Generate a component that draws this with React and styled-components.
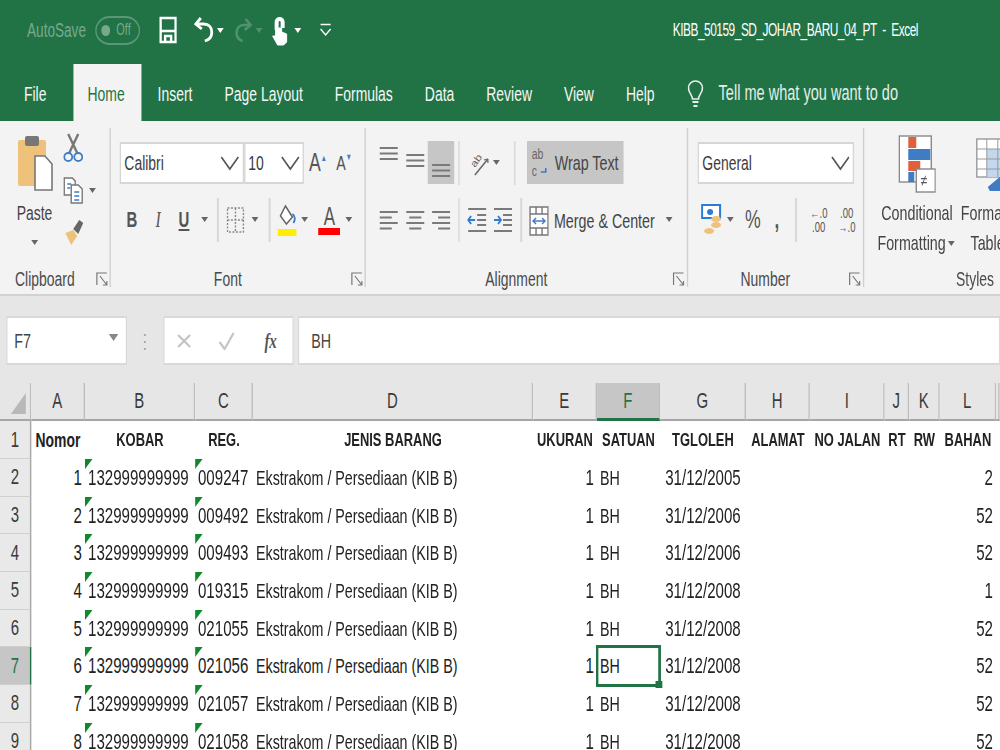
import React from 'react'
import styled, { createGlobalStyle } from 'styled-components'

const GlobalStyle = createGlobalStyle`
    html, body { margin: 0; padding: 0; background: #fff; overflow: hidden; }
    body { font-family: 'Liberation Sans', sans-serif; }
`

const GREEN = '#217346'

// the whole window is squeezed sideways, so horizontal sizes go through x()
const SQUEEZE = 0.68
const x = n => `${n / SQUEEZE}px`

const Viewport = styled.div`
    width: 1000px;
    height: 750px;
    overflow: hidden;
    filter: blur(0.45px);
`
const Page = styled.div`
    width: ${x(1000)};
    height: 750px;
    display: flex;
    flex-direction: column;
    transform: scaleX(${SQUEEZE});
    transform-origin: left top;
`

const Svg = ({ w, h, children, ...rest }) => (
    <svg width={w / SQUEEZE} height={h} viewBox={`0 0 ${w} ${h}`} preserveAspectRatio="none" style={{ flex: 'none' }} {...rest}>
        {children}
    </svg>
)

//title bar
const TitleBar = styled.div`
    height: 64px;
    flex: none;
    background: ${GREEN};
    display: flex;
    align-items: center;
    padding: 0 ${x(82)} 4px ${x(27)};
    box-sizing: border-box;
    color: #fff;
`
const AutoSave = styled.span`
    font-size: 20px;
    color: #78a98d;
    width: ${x(68)};
    white-space: nowrap;
`
const Toggle = styled.span`
    width: ${x(45)};
    height: 29px;
    flex: none;
    box-sizing: border-box;
    border: 2px solid #5c9677;
    border-radius: ${x(15)} / 15px;
    display: flex;
    align-items: center;
    gap: ${x(6)};
    padding-left: ${x(5)};
    color: #78a98d;
    font-size: 16px;
    margin-right: ${x(19)};
    &::before {
        content: '';
        width: ${x(9)};
        height: 11px;
        border-radius: 50%;
        background: #78a98d;
    }
`
const Qat = styled.div`
    display: flex;
    align-items: center;
`
const IconSlot = styled.span`
    display: flex;
    flex: none;
    margin-left: ${p => x(p.$ml || 0)};
`
const DocTitle = styled.div`
    margin-left: auto;
    font-size: 17.5px;
    letter-spacing: -0.7px;
    white-space: pre;
`

//tabs
const TabBar = styled.div`
    height: 57px;
    flex: none;
    background: ${GREEN};
    display: flex;
    align-items: stretch;
    padding-left: ${x(8)};
`
const Tab = styled.div`
    display: flex;
    align-items: center;
    white-space: nowrap;
    padding: 2px ${x(16)} 0;
    font-size: 20.5px;
    color: ${p => (p.$active ? GREEN : '#f4f8f5')};
    background: ${p => (p.$active ? '#f3f3f3' : 'transparent')};
`
const FileTab = styled(Tab)`
    padding-right: ${x(27)};
`
const HomeTab = styled(Tab)`
    padding: 2px ${x(17)} 0 ${x(14)};
`
const TellMe = styled.div`
    display: flex;
    align-items: center;
    white-space: nowrap;
    gap: ${x(15)};
    margin-left: ${x(17)};
    font-size: 21.4px;
    color: #e3eee8;
    padding-top: 2px;
`

//ribbon
const Ribbon = styled.div`
    height: 175px;
    flex: none;
    box-sizing: border-box;
    background: #f3f3f3;
    border-bottom: 2px solid #d2d2d2;
    display: flex;
    padding-top: 7px;
    color: #444;
`
const Group = styled.div`
    width: ${p => x(p.$w)};
    flex: none;
    height: 159px;
    box-sizing: border-box;
    border-right: ${p => (p.$last ? 'none' : `${x(2)} solid #cfcfcf`)};
    display: flex;
    flex-direction: column;
    position: relative;
`
const GroupBody = styled.div`
    flex: 1;
    min-height: 0;
    display: flex;
`
const GroupLabel = styled.div`
    height: 16px;
    flex: none;
    display: flex;
    align-items: center;
    justify-content: center;
    padding-right: ${x(20)};
    font-size: 20.5px;
    color: #4a4a4a;
`
const LauncherSlot = styled.span`
    position: absolute;
    right: ${x(1)};
    bottom: 0;
    display: flex;
`
const ToolRows = styled.div`
    display: flex;
    flex-direction: column;
    gap: 14px;
    padding-top: 13px;
    padding-left: ${p => x(p.$left || 0)};
`
const ToolRow = styled.div`
    display: flex;
    align-items: center;
    height: 43px;
`
const PasteCol = styled.div`
    width: ${x(63)};
    flex: none;
    display: flex;
    flex-direction: column;
    align-items: center;
    padding-top: 6px;
    padding-left: ${x(7)};
    box-sizing: border-box;
    font-size: 20.5px;
`
const PasteLabel = styled.span`
    margin-top: 9px;
    margin-bottom: 15px;
    margin-right: ${x(1)};
`
const ClipCol = styled.div`
    display: flex;
    flex-direction: column;
    gap: 14px;
    padding-top: 5px;
`
const ClipRow = styled.div`
    display: flex;
    align-items: center;
`
const Combo = styled.div`
    width: ${p => x(p.$w)};
    height: 42px;
    flex: none;
    box-sizing: border-box;
    background: #fff;
    border: 2px solid #d6d6d6;
    border-left-width: ${x(2)};
    border-right-width: ${x(2)};
    display: flex;
    align-items: center;
    justify-content: space-between;
    padding: 0 ${x(3)} 0 ${x(3)};
    font-size: 20.5px;
    color: #3c3c3c;
`
const Glyph = styled.span`
    width: ${p => x(p.$w || 26)};
    flex: none;
    text-align: center;
    margin-left: ${p => x(p.$ml || 0)};
    font-family: ${p => (p.$serif ? "'Liberation Serif', serif" : 'inherit')};
    font-style: ${p => (p.$italic ? 'italic' : 'normal')};
    font-weight: ${p => (p.$bold ? 700 : 400)};
    text-decoration: ${p => (p.$under ? 'underline' : 'none')};
    font-size: ${p => p.$size || 20}px;
    line-height: ${p => p.$lh || 'normal'};
    color: #555;
`
const Mark = styled.span`
    color: #3f7cc4;
    font-size: 9px;
    vertical-align: ${p => p.$lift || 10}px;
`
const Blue = styled.span`
    color: #2b7cd3;
`
const ColorA = styled(Glyph)`
    line-height: 24px;
    border-bottom: 7px solid #ff0000;
`
const Sep = styled.span`
    width: ${x(2)};
    height: ${p => p.$h || 44}px;
    flex: none;
    background: #d8d8d8;
    margin: 0 ${p => x(p.$m || 4)};
`
const Arrow = styled.span`
    flex: none;
    width: 0;
    height: 0;
    border-left: ${x(4)} solid transparent;
    border-right: ${x(4)} solid transparent;
    border-top: 5px solid ${p => p.$color || '#666'};
    margin: 0 ${p => x(p.$m || 5)};
`
const Pressed = styled.div`
    background: ${p => (p.$on ? '#c6c6c6' : 'transparent')};
    width: ${p => x(p.$w || 26)};
    height: 43px;
    flex: none;
    display: flex;
    align-items: ${p => p.$align || 'center'};
    justify-content: ${p => p.$justify || 'center'};
    gap: ${x(5)};
    font-size: 21px;
    color: #444;
    box-sizing: border-box;
    white-space: nowrap;
    padding-top: ${p => p.$top || 0}px;
    padding-left: ${p => x(p.$left || 0)};
`
const StylesBody = styled.div`
    display: flex;
    padding-top: 5px;
    padding-left: ${x(14)};
    gap: ${x(6)};
`
const StyleItem = styled.div`
    width: ${p => x(p.$w)};
    flex: none;
    display: flex;
    flex-direction: column;
    align-items: center;
    font-size: 21px;
    line-height: 30px;
    white-space: nowrap;
`
const StyleIconBox = styled.div`
    height: 62px;
    margin-bottom: 3px;
    display: flex;
    align-items: center;
`
const FormatLine = styled.span`
    display: flex;
    align-items: center;
`

//formula bar
const FormulaBar = styled.div`
    height: 87px;
    flex: none;
    box-sizing: border-box;
    background: #e6e6e6;
    padding: 20px 0 18px ${x(6)};
    display: flex;
    align-items: stretch;
`
const Field = styled.div`
    background: #fff;
    box-sizing: border-box;
    border: 2px solid #d9d9d9;
    border-left-width: ${x(2)};
    border-right-width: ${x(2)};
    display: flex;
    align-items: center;
    font-size: 21px;
    color: #444;
    width: ${p => x(p.$w || 0)};
    flex: ${p => (p.$grow ? 1 : 'none')};
    padding: 0 ${p => x(p.$pad || 0)};
    justify-content: ${p => p.$justify || 'flex-start'};
    margin-left: ${p => x(p.$ml || 0)};
`
const NameArrow = styled.span`
    flex: none;
    width: 0;
    height: 0;
    margin-bottom: 7px;
    border-left: ${x(5)} solid transparent;
    border-right: ${x(5)} solid transparent;
    border-top: 7px solid #888;
`
const GripDots = styled.span`
    width: ${x(36)};
    flex: none;
    display: flex;
    align-items: center;
    justify-content: center;
    color: #999;
    font-size: 20px;
`

//sheet
const Sheet = styled.div`
    display: grid;
    grid-template-columns: ${[31, 54, 110, 58, 280, 64, 63, 86, 64, 75, 24, 31, 56, 4].map(x).join(' ')};
    grid-template-rows: 38px 38px repeat(8, 37.7px);
    background: #fff;
`
const ColHead = styled.div`
    background: ${p => (p.$active ? '#c6c6c6' : '#e6e6e6')};
    color: ${p => (p.$active ? GREEN : '#3a3a3a')};
    border-right: ${x(1.5)} solid #bdbdbd;
    border-bottom: ${p => (p.$active ? `3px solid ${GREEN}` : '2px solid #a6a6a6')};
    box-sizing: border-box;
    display: flex;
    align-items: center;
    justify-content: center;
    font-size: 22px;
`
const Corner = styled.div`
    background: #e6e6e6;
    border-right: ${x(1.5)} solid #bdbdbd;
    border-bottom: 2px solid #a6a6a6;
    box-sizing: border-box;
    display: flex;
    align-items: flex-end;
    justify-content: flex-end;
    padding: 0 ${x(4)} 5px 0;
    &::before {
        content: '';
        border-style: solid;
        border-width: 0 0 21px ${x(15)};
        border-color: transparent transparent #b8b8b8 transparent;
    }
`
const RowHead = styled.div`
    background: ${p => (p.$active ? '#c6c6c6' : '#e9e9e9')};
    color: ${p => (p.$active ? GREEN : '#3a3a3a')};
    border-right: ${p => (p.$active ? `${x(2)} solid ${GREEN}` : `${x(1.5)} solid #a6a6a6`)};
    border-bottom: 1.5px solid #cfcfcf;
    box-sizing: border-box;
    display: flex;
    align-items: center;
    justify-content: center;
    font-size: 22px;
`
const Cell = styled.div`
    position: relative;
    box-sizing: border-box;
    display: flex;
    align-items: center;
    white-space: nowrap;
    padding: 0 ${x(3)};
    font-size: ${p => (p.$size ? p.$size : p.$num ? 22.2 : p.$bold ? 19 : 21)}px;
    color: #222;
    font-weight: ${p => (p.$bold ? 700 : 400)};
    justify-content: ${p => (p.$align === 'right' ? 'flex-end' : p.$align === 'center' ? 'center' : 'flex-start')};
    &::before {
        content: '';
        display: ${p => (p.$flag ? 'block' : 'none')};
        position: absolute;
        left: 0;
        top: 0;
        border-style: solid;
        border-width: 10px ${x(8)} 0 0;
        border-color: #0f8a2a transparent transparent transparent;
    }
`
const Selection = styled.div`
    position: absolute;
    inset: -2px ${x(-1)} -2px ${x(-1)};
    border: 3px solid ${GREEN};
    border-left-width: ${x(3)};
    border-right-width: ${x(3)};
    &::after {
        content: '';
        position: absolute;
        right: ${x(-4)};
        bottom: -4px;
        width: ${x(7)};
        height: 7px;
        background: ${GREEN};
    }
`

const Chevron = () => (
    <Svg w={19} h={16} fill="none" stroke="#555" strokeWidth="1.6"><path d="M1 2l8.5 12L18 2" /></Svg>
)

const Launch = () => (
    <LauncherSlot>
        <Svg w={13} h={15} fill="none" stroke="#777" strokeWidth="1.2">
            <path d="M1 13V1h10" />
            <path d="M4 4l7 9M11 9v4H7" />
        </Svg>
    </LauncherSlot>
)

const AlignLines = ({ widths, align = 'left', y = 3 }) => (
    <Svg w={20} h={22} stroke="#7a7a7a" strokeWidth="1.8">
        {widths.map((w, i) => {
            const left = align === 'left' ? 1 : align === 'right' ? 19 - w : 10 - w / 2
            return <line key={i} x1={left} x2={left + w} y1={y + i * 5.5} y2={y + i * 5.5} />
        })}
    </Svg>
)

const Indent = ({ out }) => (
    <Svg w={20} h={28} fill="none" strokeWidth="1.8">
        <g stroke="#7a7a7a">
            <line x1="1" x2="19" y1="3" y2="3" />
            <line x1="10" x2="19" y1="9" y2="9" />
            <line x1="10" x2="19" y1="14" y2="14" />
            <line x1="10" x2="19" y1="19" y2="19" />
            <line x1="1" x2="19" y1="25" y2="25" />
        </g>
        <path d={out ? 'M8 14H1M4 10l-3 4 3 4' : 'M1 14h7M5 10l3 4-3 4'} stroke="#2b7cd3" />
    </Svg>
)

const columns = ['A', 'B', 'C', 'D', 'E', 'F', 'G', 'H', 'I', 'J', 'K', 'L']
const headers = ['Nomor', 'KOBAR', 'REG.', 'JENIS BARANG', 'UKURAN', 'SATUAN', 'TGLOLEH', 'ALAMAT', 'NO JALAN', 'RT', 'RW', 'BAHAN']
const rows = [
    ['009247', '31/12/2005', '2'],
    ['009492', '31/12/2006', '52'],
    ['009493', '31/12/2006', '52'],
    ['019315', '31/12/2008', '1'],
    ['021055', '31/12/2008', '52'],
    ['021056', '31/12/2008', '52'],
    ['021057', '31/12/2008', '52'],
    ['021058', '31/12/2008', '52'],
]

const App = () => {
    return (
        <Viewport>
            <GlobalStyle />
            <Page>
                <TitleBar>
                    <AutoSave>AutoSave</AutoSave>
                    <Toggle>Off</Toggle>
                    <Qat>
                        <IconSlot>
                            <Svg w={18} h={28} fill="none" stroke="#fff" strokeWidth="2.4">
                                <path d="M1.5 2h15v24h-15z" />
                                <path d="M1.5 15h15M6 26v-6h6v6" />
                            </Svg>
                        </IconSlot>
                        <IconSlot $ml={17}>
                            <Svg w={20} h={28} fill="none" stroke="#fff" strokeWidth="2.8">
                                <path d="M7 2L2 8l6 5" />
                                <path d="M2 8h8c5 0 8 3 8 8s-3 8-7 9" />
                            </Svg>
                        </IconSlot>
                        <Arrow $m={3} $color="#fff" />
                        <IconSlot $ml={8}>
                            <Svg w={18} h={26} fill="none" stroke="#4f9170" strokeWidth="2.6">
                                <path d="M11 2l5 6-6 5" />
                                <path d="M16 8H9c-4 0-7 3-7 8s3 7 6 8" />
                            </Svg>
                        </IconSlot>
                        <Arrow $m={3} $color="#4f9170" />
                        <IconSlot $ml={5}>
                            <Svg w={18} h={32} fill="#fff" stroke="#fff">
                                <path d="M5 8a4 4 0 0 1 8 0v5h-2V8a2 2 0 0 0-4 0v7H5z" fill="none" strokeWidth="2" />
                                <path d="M5 14h6v4l5 2v8l-3 3H7l-5-9 3 0z" />
                            </Svg>
                        </IconSlot>
                        <Arrow $m={6} $color="#fff" />
                        <IconSlot $ml={12}>
                            <Svg w={12} h={14} fill="none" stroke="#fff" strokeWidth="1.4">
                                <path d="M1 1.5h10M1 6l5 6 5-6" />
                            </Svg>
                        </IconSlot>
                    </Qat>
                    <DocTitle>{'KIBB_50159_SD_JOHAR_BARU_04_PT  -  Excel'}</DocTitle>
                </TitleBar>

                <TabBar>
                    <FileTab>File</FileTab>
                    <HomeTab $active>Home</HomeTab>
                    <Tab>Insert</Tab>
                    <Tab>Page Layout</Tab>
                    <Tab>Formulas</Tab>
                    <Tab>Data</Tab>
                    <Tab>Review</Tab>
                    <Tab>View</Tab>
                    <Tab>Help</Tab>
                    <TellMe>
                        <Svg w={16} h={30} fill="none" stroke="#e8f0ec" strokeWidth="1.6">
                            <path d="M5 20c0-4-4-6-4-11a7 7 0 0 1 14 0c0 5-4 7-4 11z" />
                            <path d="M5 23h6M6 27h4" strokeWidth="2" />
                        </Svg>
                        Tell me what you want to do
                    </TellMe>
                </TabBar>

                <Ribbon>
                    <Group $w={111}>
                        <GroupBody>
                            <PasteCol>
                                <Svg w={36} h={58}>
                                    <rect x="1" y="6" width="28" height="46" rx="2" fill="#eec27a" />
                                    <rect x="8" y="2" width="14" height="10" rx="2" fill="#777" />
                                    <path d="M18 22h10l7 8v26H18z" fill="#fff" stroke="#777" strokeWidth="1.6" />
                                </Svg>
                                <PasteLabel>Paste</PasteLabel>
                                <Arrow />
                            </PasteCol>
                            <ClipCol>
                                <Svg w={20} h={30} fill="none">
                                    <path d="M5 1l9 19M15 1L6 20" stroke="#777" strokeWidth="2.4" />
                                    <circle cx="5" cy="24" r="4" stroke="#3f7cc4" strokeWidth="1.8" />
                                    <circle cx="15" cy="24" r="4" stroke="#3f7cc4" strokeWidth="1.8" />
                                </Svg>
                                <ClipRow>
                                    <Svg w={20} h={27} fill="#fff" stroke="#777" strokeWidth="1.4">
                                        <path d="M1 1h8l3 3v14H1z" />
                                        <path d="M8 8h7l4 4v14H8z" />
                                        <path d="M4 7h4M4 11h3M11 15h5M11 19h5M11 23h5" stroke="#3f7cc4" />
                                    </Svg>
                                    <Arrow $m={6} />
                                </ClipRow>
                                <Svg w={20} h={28}>
                                    <path d="M2 15l8-3 4 6-6 9z" fill="#eec27a" />
                                    <path d="M10 11l6-9 4 3-5 11z" fill="#666" />
                                </Svg>
                            </ClipCol>
                        </GroupBody>
                        <GroupLabel>Clipboard</GroupLabel>
                        <Launch />
                    </Group>

                    <Group $w={255}>
                        <GroupBody>
                            <ToolRows $left={9}>
                                <ToolRow>
                                    <Combo $w={124}>Calibri<Chevron /></Combo>
                                    <Combo $w={60}>10<Chevron /></Combo>
                                    <Glyph $w={26} $ml={1} $size={26}>A<Mark>▲</Mark></Glyph>
                                    <Glyph $w={26} $size={21}>A<Mark>▼</Mark></Glyph>
                                </ToolRow>
                                <ToolRow>
                                    <Glyph $w={26} $ml={-1} $bold $size={22}>B</Glyph>
                                    <Glyph $w={26} $italic $serif $size={23}>I</Glyph>
                                    <Glyph $w={26} $under $bold $size={22}>U</Glyph>
                                    <Arrow $m={4} />
                                    <Sep $m={5} />
                                    <IconSlot $ml={3}>
                                        <Svg w={18} h={26} fill="none" stroke="#888" strokeWidth="1.4" strokeDasharray="2 1.5">
                                            <path d="M1 1h16v24H1zM1 13h16M9 1v24" />
                                        </Svg>
                                    </IconSlot>
                                    <Arrow $m={7} />
                                    <Sep $m={3} />
                                    <IconSlot $ml={4}>
                                        <Svg w={20} h={32} fill="none">
                                            <path d="M8 2l7 11-6 7-6-8z" fill="#fff" stroke="#666" strokeWidth="1.5" />
                                            <path d="M15 10c3 2 3 6 1 9" stroke="#3f7cc4" strokeWidth="1.8" />
                                            <rect x="0" y="25" width="19" height="7" fill="#ffee00" />
                                        </Svg>
                                    </IconSlot>
                                    <Arrow $m={4} />
                                    <ColorA $w={22} $ml={6} $size={25}>A</ColorA>
                                    <Arrow $m={5} />
                                </ToolRow>
                            </ToolRows>
                        </GroupBody>
                        <GroupLabel>Font</GroupLabel>
                        <Launch />
                    </Group>

                    <Group $w={322}>
                        <GroupBody>
                            <ToolRows $left={10}>
                                <ToolRow>
                                    <Pressed $align="flex-start" $top={4}><AlignLines widths={[18, 18, 18]} /></Pressed>
                                    <Pressed $align="flex-start" $top={11}><AlignLines widths={[18, 18, 18]} /></Pressed>
                                    <Pressed $on $align="flex-end"><AlignLines widths={[18, 18, 18]} /></Pressed>
                                    <Sep $m={4} />
                                    <IconSlot $ml={6}>
                                        <Svg w={20} h={28} fill="none" stroke="#666">
                                            <text x="0" y="0" fontSize="12" fill="#666" stroke="none" transform="translate(5 19) rotate(-55) scale(1 .8)">ab</text>
                                            <path d="M5 26L18 10" strokeWidth="1.5" />
                                            <path d="M18 10l-4 1M18 10l0 4" strokeWidth="1.2" />
                                        </Svg>
                                    </IconSlot>
                                    <Arrow $m={3} />
                                    <Sep $m={11} />
                                    <Pressed $on $w={97} $left={5} $justify="flex-start">
                                        <Svg w={18} h={34}>
                                            <text x="0" y="13" fontSize="15" fill="#666" transform="scale(.7 1)">ab</text>
                                            <text x="0" y="30" fontSize="15" fill="#666" transform="scale(.7 1)">c</text>
                                            <path d="M14 22v4h-5" fill="none" stroke="#3f7cc4" strokeWidth="1.6" />
                                        </Svg>
                                        Wrap Text
                                    </Pressed>
                                </ToolRow>
                                <ToolRow>
                                    <Pressed><AlignLines widths={[18, 12, 18, 12]} /></Pressed>
                                    <Pressed><AlignLines align="center" widths={[18, 12, 18, 12]} /></Pressed>
                                    <Pressed><AlignLines align="right" widths={[18, 12, 18, 12]} /></Pressed>
                                    <Sep $m={4} />
                                    <Pressed><Indent out /></Pressed>
                                    <Pressed><Indent /></Pressed>
                                    <Sep $m={4} />
                                    <Pressed $w={134} $left={3} $top={2} $justify="flex-start">
                                        <Svg w={20} h={30} fill="#fff" stroke="#777" strokeWidth="1.4">
                                            <path d="M1 1h18v28H1zM1 8h18M1 22h18M7 1v7M13 1v7M7 22v7M13 22v7" />
                                            <path d="M4 15h12M7 12l-3 3 3 3M13 12l3 3-3 3" stroke="#3f7cc4" fill="none" />
                                        </Svg>
                                        Merge &amp; Center
                                    </Pressed>
                                    <Arrow $m={6} />
                                </ToolRow>
                            </ToolRows>
                        </GroupBody>
                        <GroupLabel>Alignment</GroupLabel>
                        <Launch />
                    </Group>

                    <Group $w={176}>
                        <GroupBody>
                            <ToolRows $left={10}>
                                <ToolRow>
                                    <Combo $w={156}>General<Chevron /></Combo>
                                </ToolRow>
                                <ToolRow>
                                    <IconSlot $ml={3}>
                                        <Svg w={21} h={31}>
                                            <rect x="1" y="1" width="18" height="13" fill="#fff" stroke="#2b7cd3" strokeWidth="2" />
                                            <circle cx="9" cy="8" r="3" fill="#2b7cd3" />
                                            <ellipse cx="15" cy="15" rx="5" ry="3" fill="#eec27a" />
                                            <ellipse cx="15" cy="21" rx="5" ry="3" fill="#eec27a" />
                                            <ellipse cx="8" cy="27" rx="5" ry="3" fill="#eec27a" />
                                        </Svg>
                                    </IconSlot>
                                    <Arrow $m={5} />
                                    <Glyph $w={24} $ml={2} $size={26}>%</Glyph>
                                    <Glyph $w={24} $size={25} $bold>,</Glyph>
                                    <Sep $m={6} />
                                    <Glyph $w={26} $ml={3} $size={14} $lh="14px"><Blue>←</Blue>.0<br />.00</Glyph>
                                    <Glyph $w={26} $ml={2} $size={14} $lh="14px">.00<br /><Blue>→</Blue>.0</Glyph>
                                </ToolRow>
                            </ToolRows>
                        </GroupBody>
                        <GroupLabel>Number</GroupLabel>
                        <Launch />
                    </Group>

                    <Group $w={242} $last>
                        <GroupBody>
                            <StylesBody>
                                <StyleItem $w={78}>
                                    <StyleIconBox>
                                        <Svg w={38} h={58}>
                                            <rect x="1" y="1" width="32" height="46" fill="#fff" stroke="#888" strokeWidth="1.4" />
                                            <rect x="10" y="2" width="8" height="11" fill="#e0603a" />
                                            <rect x="10" y="14" width="22" height="11" fill="#3f7cc4" />
                                            <rect x="10" y="26" width="12" height="10" fill="#e0603a" />
                                            <rect x="10" y="37" width="6" height="10" fill="#3f7cc4" />
                                            <rect x="18" y="34" width="19" height="23" fill="#fff" stroke="#888" strokeWidth="1.4" />
                                            <text x="30" y="51" fontSize="16" fill="#555" transform="scale(.75 1)">≠</text>
                                        </Svg>
                                    </StyleIconBox>
                                    <span>Conditional</span>
                                    <FormatLine>Formatting<Arrow $m={2} /></FormatLine>
                                </StyleItem>
                                <StyleItem $w={62}>
                                    <StyleIconBox>
                                        <Svg w={34} h={58}>
                                            <rect x="1" y="4" width="33" height="38" fill="#fff" stroke="#999" strokeWidth="1.4" />
                                            <rect x="11" y="14" width="23" height="28" fill="#c3d7ee" />
                                            <path d="M1 14h33M1 24h33M1 34h33M11 4v38M22 4v38" stroke="#999" />
                                            <path d="M12 52l12-10 10 4v10H14z" fill="#3f7cc4" />
                                        </Svg>
                                    </StyleIconBox>
                                    <span>Format as</span>
                                    <FormatLine>Table<Arrow $m={2} /></FormatLine>
                                </StyleItem>
                            </StylesBody>
                        </GroupBody>
                        <GroupLabel>Styles</GroupLabel>
                    </Group>
                </Ribbon>

                <FormulaBar>
                    <Field $w={121} $pad={7} $justify="space-between">F7<NameArrow /></Field>
                    <GripDots>⋮</GripDots>
                    <Field $w={131} $justify="space-between" $pad={12}>
                        <Svg w={16} h={16} stroke="#c4c4c4" strokeWidth="2.2"><path d="M2 2l12 12M14 2L2 14" /></Svg>
                        <Svg w={18} h={18} fill="none" stroke="#c4c4c4" strokeWidth="2.2"><path d="M2 10l5 7L16 1" /></Svg>
                        <Glyph $w={20} $italic $serif $bold $size={22}>fx</Glyph>
                    </Field>
                    <Field $grow $ml={4} $pad={12}>BH</Field>
                </FormulaBar>

                <Sheet>
                    <Corner />
                    {columns.map(c => <ColHead key={c} $active={c === 'F'}>{c}</ColHead>)}
                    <ColHead />

                    <RowHead>1</RowHead>
                    {headers.map(h => <Cell key={h} $bold $align="center" $size={h === 'Nomor' ? 20.5 : undefined}>{h}</Cell>)}
                    <Cell />

                    {rows.map((r, i) => (
                        <React.Fragment key={r[0]}>
                            <RowHead $active={i === 5}>{i + 2}</RowHead>
                            <Cell $num $align="right">{i + 1}</Cell>
                            <Cell $num $flag>132999999999</Cell>
                            <Cell $num $flag>{r[0]}</Cell>
                            <Cell>Ekstrakom / Persediaan (KIB B)</Cell>
                            <Cell $num $align="right">1</Cell>
                            <Cell>BH{i === 5 && <Selection />}</Cell>
                            <Cell $num $align="center">{r[1]}</Cell>
                            <Cell />
                            <Cell />
                            <Cell />
                            <Cell />
                            <Cell $num $align="right">{r[2]}</Cell>
                            <Cell />
                        </React.Fragment>
                    ))}
                </Sheet>
            </Page>
        </Viewport>
    )
}

export default App
